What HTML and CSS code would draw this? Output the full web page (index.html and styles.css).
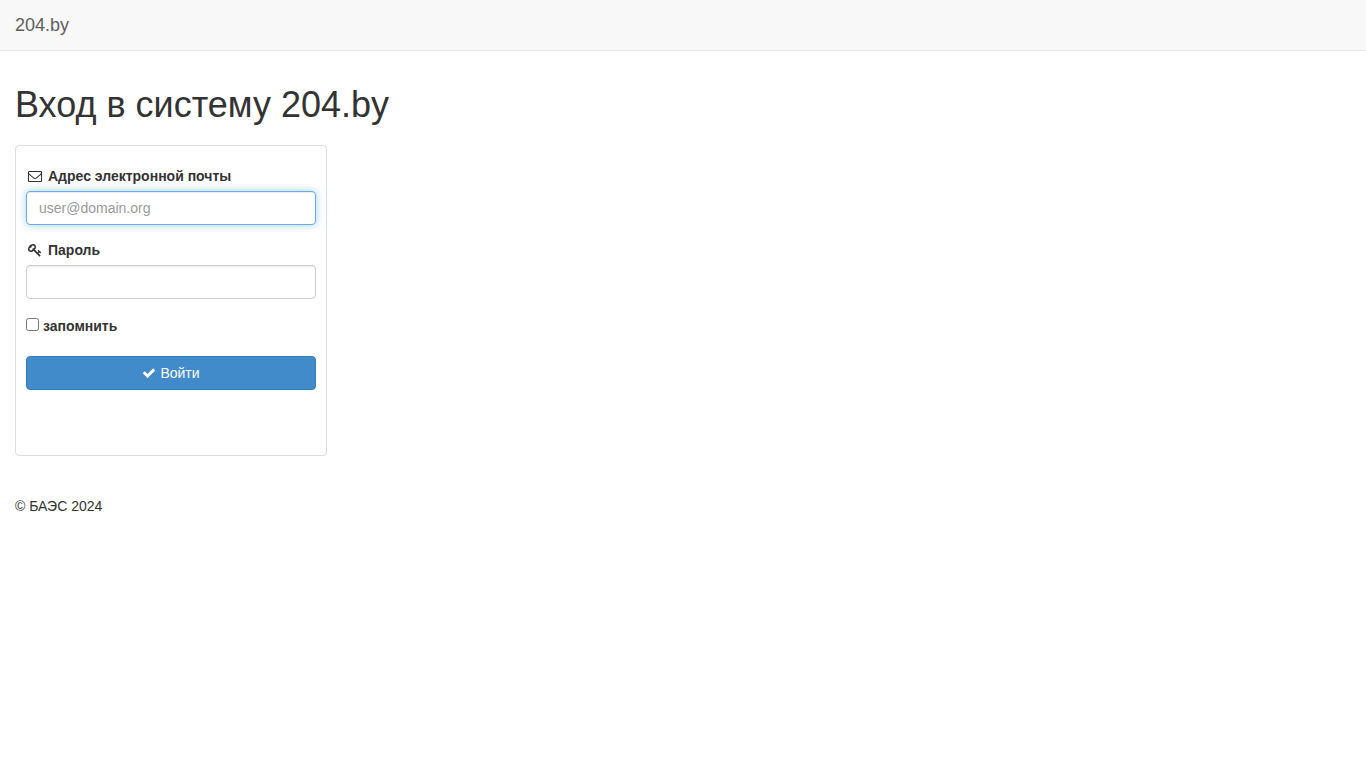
FILE: index.html
```html
<!DOCTYPE html>
<html lang="ru">
<head>
<meta charset="utf-8">
<meta name="viewport" content="width=device-width, initial-scale=1">
<title>204.by</title>
<link rel="stylesheet" href="styles.css">
</head>
<body>
<nav class="navbar"><a class="navbar-brand" href="#">204.by</a></nav>
<main class="content">
  <h1 class="title">Вход в систему 204.by</h1>
  <form class="panel">
    <div class="form-group">
      <label class="label" for="email">
        <svg class="icon" viewBox="0 0 1792 1792" aria-hidden="true"><path d="M1664 1504v-768q-32 36-69 66-268 206-426 338-51 43-83 67t-86.500 48.500-102.500 24.500h-2q-48 0-102.500-24.500t-86.500-48.500-83-67q-158-132-426-338-37-30-69-66v768q0 13 9.500 22.500t22.500 9.500h1472q13 0 22.500-9.500t9.500-22.500zm0-1051v-24.500l-.5-13-3-12.500-5.500-9-9-7.500-14-2.500h-1472q-13 0-22.500 9.500t-9.500 22.500q0 168 147 284 193 152 401 317 6 5 35 29.500t46 37.500 44.500 31.500 50.500 27.500 43 9h2q20 0 43-9t50.500-27.500 44.500-31.500 46-37.500 35-29.500q208-165 401-317 54-43 100.500-115.500t46.500-131.500zm128-37v1088q0 66-47 113t-113 47h-1472q-66 0-113-47t-47-113v-1088q0-66 47-113t113-47h1472q66 0 113 47t47 113z"/></svg>
        <span>Адрес электронной почты</span>
      </label>
      <input class="control control-active" id="email" type="email" placeholder="user@domain.org">
    </div>
    <div class="form-group">
      <label class="label" for="password">
        <svg class="icon" viewBox="0 0 1792 1792" aria-hidden="true"><path d="M832 512q0-80-56-136t-136-56-136 56-56 136q0 42 19 83-41-19-83-19-80 0-136 56t-56 136 56 136 136 56 136-56 56-136q0-42-19-83 41 19 83 19 80 0 136-56t56-136zm851 704q0 17-49 66t-66 49q-9 0-28.500-16t-36.500-33-38.500-40-24.500-26l-96 96 220 220q28 28 28 68 0 42-39 81t-81 39q-40 0-68-28l-671-671q-176 131-365 131-163 0-265.500-102.500t-102.500-265.500q0-160 95-313t248-248 313-95q163 0 265.500 102.500t102.500 265.500q0 189-131 365l355 355 96-96q-3-3-26-24.500t-40-38.500-33-36.500-16-28.500q0-17 49-66t66-49q13 0 23 10 6 6 46 44.500t82 79.500 86.500 86 73 78 28.500 41z"/></svg>
        <span>Пароль</span>
      </label>
      <input class="control" id="password" type="password">
    </div>
    <div class="remember">
      <input class="checkbox" id="remember" type="checkbox">
      <label for="remember">запомнить</label>
    </div>
    <button class="button" type="submit">
      <svg class="button-icon" viewBox="0 0 1792 1792" aria-hidden="true"><path d="M1671 566q0 40-28 68l-724 724-136 136q-28 28-68 28t-68-28l-136-136-362-362q-28-28-28-68t28-68l136-136q28-28 68-28t68 28l294 295 656-657q28-28 68-28t68 28l136 136q28 28 28 68z"/></svg>
      <span>Войти</span>
    </button>
  </form>
</main>
<footer class="footer">© БАЭС 2024</footer>
</body>
</html>
```
FILE: styles.css
```css
* { box-sizing: border-box; }

body {
  margin: 0;
  background: #fff;
  color: #333;
  font: 14px/20px "Liberation Sans", Arial, sans-serif;
}

.navbar {
  display: flex;
  background: #f8f8f8;
  border-bottom: 1px solid #e7e7e7;
}

.navbar-brand {
  padding: 15px;
  color: #5e5e5e;
  font-size: 18px;
  text-decoration: none;
}

.content { padding: 34px 15px 0; }

.title {
  margin: 0 0 20px;
  font-size: 36px;
  font-weight: 500;
  line-height: 40px;
}

.panel {
  width: 312px;
  max-width: 100%;
  padding: 20px 10px 65px;
  border: 1px solid #ddd;
  border-radius: 4px;
}

.form-group { margin-bottom: 15px; }

.label {
  display: flex;
  align-items: center;
  gap: 6px;
  margin-bottom: 5px;
  padding-left: 2px;
  font-weight: 700;
}

.icon, .button-icon {
  width: 14px;
  height: 14px;
  fill: currentColor;
}

.control {
  display: block;
  width: 100%;
  height: 34px;
  padding: 6px 12px;
  border: 1px solid #ccc;
  border-radius: 4px;
  background: #fff;
  color: #555;
  font: inherit;
  box-shadow: inset 0 1px 1px rgba(0, 0, 0, .075);
}

.control::placeholder { color: #999; opacity: 1; }

.control-active, .control:focus {
  border-color: #66afe9;
  outline: 0;
  box-shadow: inset 0 1px 1px rgba(0, 0, 0, .075), 0 0 8px rgba(102, 175, 233, .6);
}

.remember {
  display: flex;
  align-items: flex-start;
  gap: 4px;
  margin: 17px 0 20px;
  font-weight: 700;
}

.checkbox {
  width: 13px;
  height: 13px;
  margin: 2px 0 0;
}

.button {
  display: flex;
  justify-content: center;
  align-items: center;
  gap: 4px;
  width: 100%;
  padding: 6px 12px;
  border: 1px solid #357ebd;
  border-radius: 4px;
  background: #428bca;
  color: #fff;
  font: inherit;
  cursor: pointer;
}

.footer { padding: 40px 15px 20px; }
```
